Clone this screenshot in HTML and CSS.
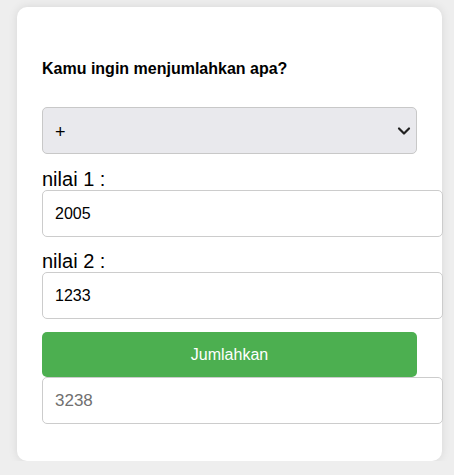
FILE: index.html
```html
<!DOCTYPE html>
<html lang="id">
<head>
<meta charset="utf-8">
<title>Penjumlahan</title>
<link rel="stylesheet" href="styles.css">
</head>
<body>
<div class="card">
  <h4 class="title">Kamu ingin menjumlahkan apa?</h4>
  <div class="select-wrap">
    <select class="op">
      <option>+</option>
    </select>
    <svg class="chev" width="14" height="10" viewBox="0 0 14 10" aria-hidden="true">
      <path d="M2 2.5 L7 7.5 L12 2.5" fill="none" stroke="#222" stroke-width="2.2" stroke-linecap="round" stroke-linejoin="round"/>
    </svg>
  </div>
  <label class="lbl" for="n1">nilai 1 :</label>
  <input class="field" id="n1" type="text" value="2005">
  <label class="lbl lbl-second" for="n2">nilai 2 :</label>
  <input class="field" id="n2" type="text" value="1233">
  <button class="btn" type="button">Jumlahkan</button>
  <input class="field result" type="text" value="3238" readonly>
</div>
</body>
</html>
```

FILE: styles.css
```css
html, body {
  margin: 0;
  padding: 0;
}
body {
  background: #eeeeee;
  font-family: "Liberation Sans", Arial, sans-serif;
  color: #000;
}
.card {
  box-sizing: border-box;
  width: 425px;
  height: 454px;
  margin: 7px 0 0 17px;
  padding: 0 25px;
  background: #fff;
  border-radius: 10px;
  box-shadow: 0 0 10px rgba(0, 0, 0, 0.1);
  display: flex;
  flex-direction: column;
  align-items: flex-start;
}
.title {
  margin: 52px 0 0 0;
  font-size: 16px;
  line-height: 19px;
  font-weight: bold;
}
.select-wrap {
  position: relative;
  margin-top: 29px;
  width: 375px;
  height: 47px;
}
.op {
  box-sizing: border-box;
  display: block;
  width: 375px;
  height: 47px;
  margin: 0;
  padding: 2px 30px 0 12px;
  font-family: "Liberation Sans", Arial, sans-serif;
  font-size: 18px;
  color: #000;
  background-color: #e9e9ed;
  border: 1px solid #c8c8c8;
  border-radius: 5px;
  -webkit-appearance: none;
  appearance: none;
  outline: none;
}
.chev {
  position: absolute;
  right: 6px;
  top: 19px;
  pointer-events: none;
}
.lbl {
  margin-top: 14px;
  font-size: 20px;
  line-height: 22px;
  height: 22px;
}
.lbl-second {
  margin-top: 13px;
}
.field {
  box-sizing: border-box;
  width: 401px;
  height: 47px;
  margin: 0;
  padding: 0 12px;
  font-family: "Liberation Sans", Arial, sans-serif;
  font-size: 16px;
  color: #000;
  background: #fff;
  border: 1px solid #cccccc;
  border-radius: 5px;
  outline: none;
}
.btn {
  box-sizing: border-box;
  margin-top: 13px;
  width: 375px;
  height: 45px;
  border: none;
  border-radius: 5px;
  background: #4caf50;
  color: #fff;
  font-family: "Liberation Sans", Arial, sans-serif;
  font-size: 16px;
}
.result {
  color: #707070;
  font-size: 17px;
}
```
